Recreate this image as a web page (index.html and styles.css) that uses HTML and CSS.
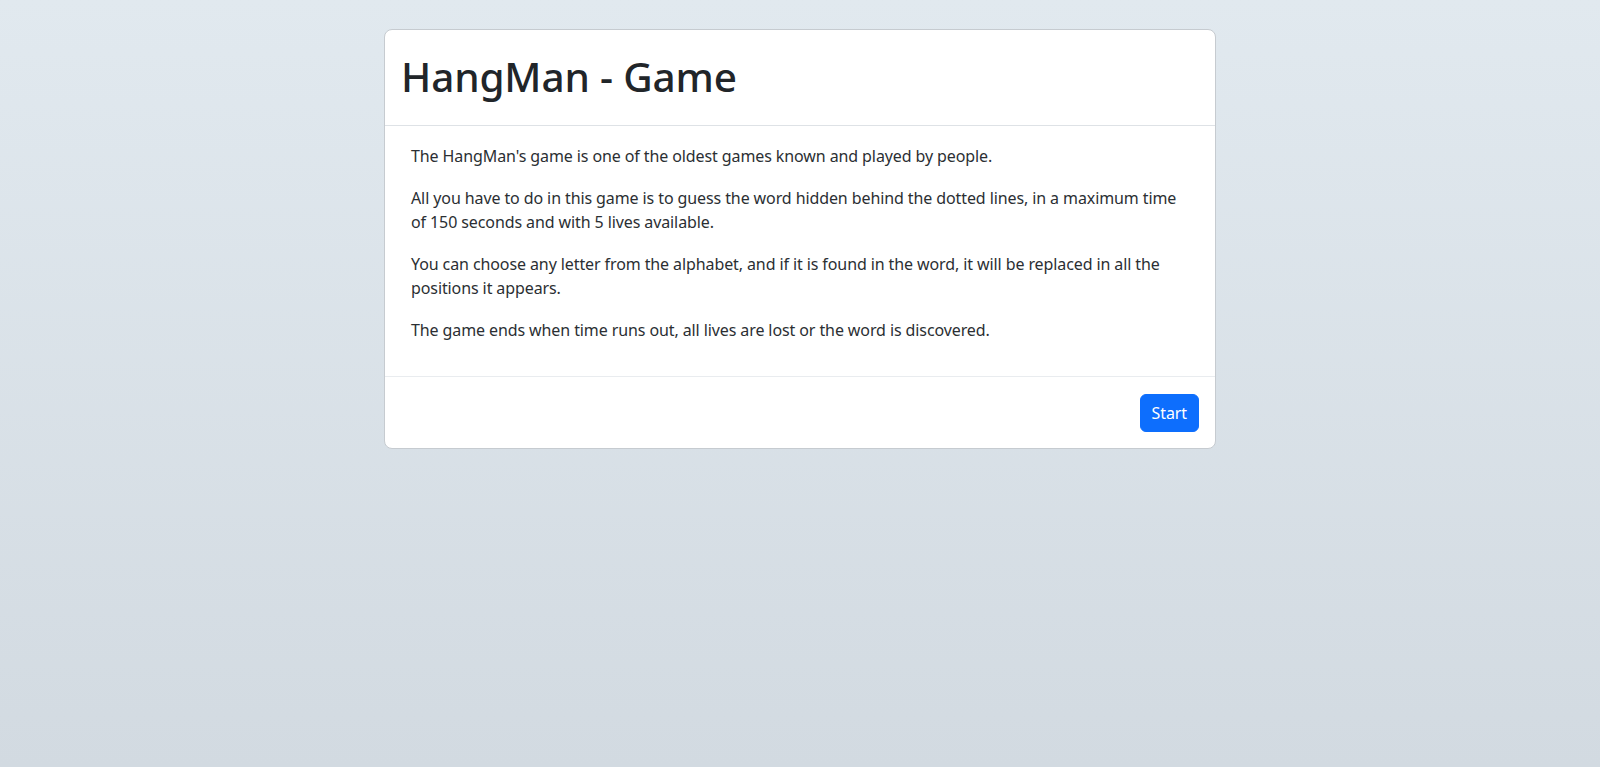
FILE: index.html
```html
<!DOCTYPE html>
<html lang="en">
<head>
<meta charset="utf-8">
<title>HangMan - Game</title>
<link rel="stylesheet" href="styles.css">
</head>
<body>
<main class="page">
  <section class="card">
    <header class="card-header">
      <h1 class="title">HangMan - Game</h1>
    </header>
    <div class="card-body">
      <p>The HangMan's game is one of the oldest games known and played by people.</p>
      <p>All you have to do in this game is to guess the word hidden behind the dotted lines, in a maximum time of 150 seconds and with 5 lives available.</p>
      <p>You can choose any letter from the alphabet, and if it is found in the word, it will be replaced in all the positions it appears.</p>
      <p>The game ends when time runs out, all lives are lost or the word is discovered.</p>
    </div>
    <footer class="card-footer">
      <button class="btn-start" type="button">Start</button>
    </footer>
  </section>
</main>
</body>
</html>
```

FILE: styles.css
```css
* { box-sizing: border-box; }
html, body { height: 100%; }
body {
  margin: 0;
  font-family: "Noto Sans", "Open Sans", sans-serif;
  color: #212529;
  background: linear-gradient(180deg, #e1e9ef 0%, #d2dae1 100%);
}
.page {
  padding-top: 29px;
  display: flex;
  justify-content: center;
}
.card {
  width: 832px;
  background: #fff;
  border: 1px solid #c6cbd0;
  border-radius: 8px;
  overflow: hidden;
}
.card-header {
  padding: 20px 16px 21px;
  border-bottom: 1px solid #dee2e6;
}
.title {
  margin: 0;
  font-size: 40.5px;
  line-height: 54px;
  font-weight: 500;
  letter-spacing: -0.15px;
  color: #212529;
}
.card-body {
  padding: 18px 26px 17px;
  font-size: 16px;
  line-height: 24.5px;
  letter-spacing: -0.1px;
  color: #2b2f33;
}
.card-body p { margin: 0 0 17px; }
.card-footer {
  padding: 17px 16px 16px;
  border-top: 1px solid #e9ecef;
  display: flex;
  justify-content: flex-end;
}
.btn-start {
  font-family: inherit;
  font-size: 16px;
  line-height: 24.5px;
  height: 38px;
  padding: 6px 11px;
  border: 1px solid #0d6efd;
  border-radius: 6px;
  background: #0d6efd;
  color: #fff;
  letter-spacing: -0.1px;
}
```
